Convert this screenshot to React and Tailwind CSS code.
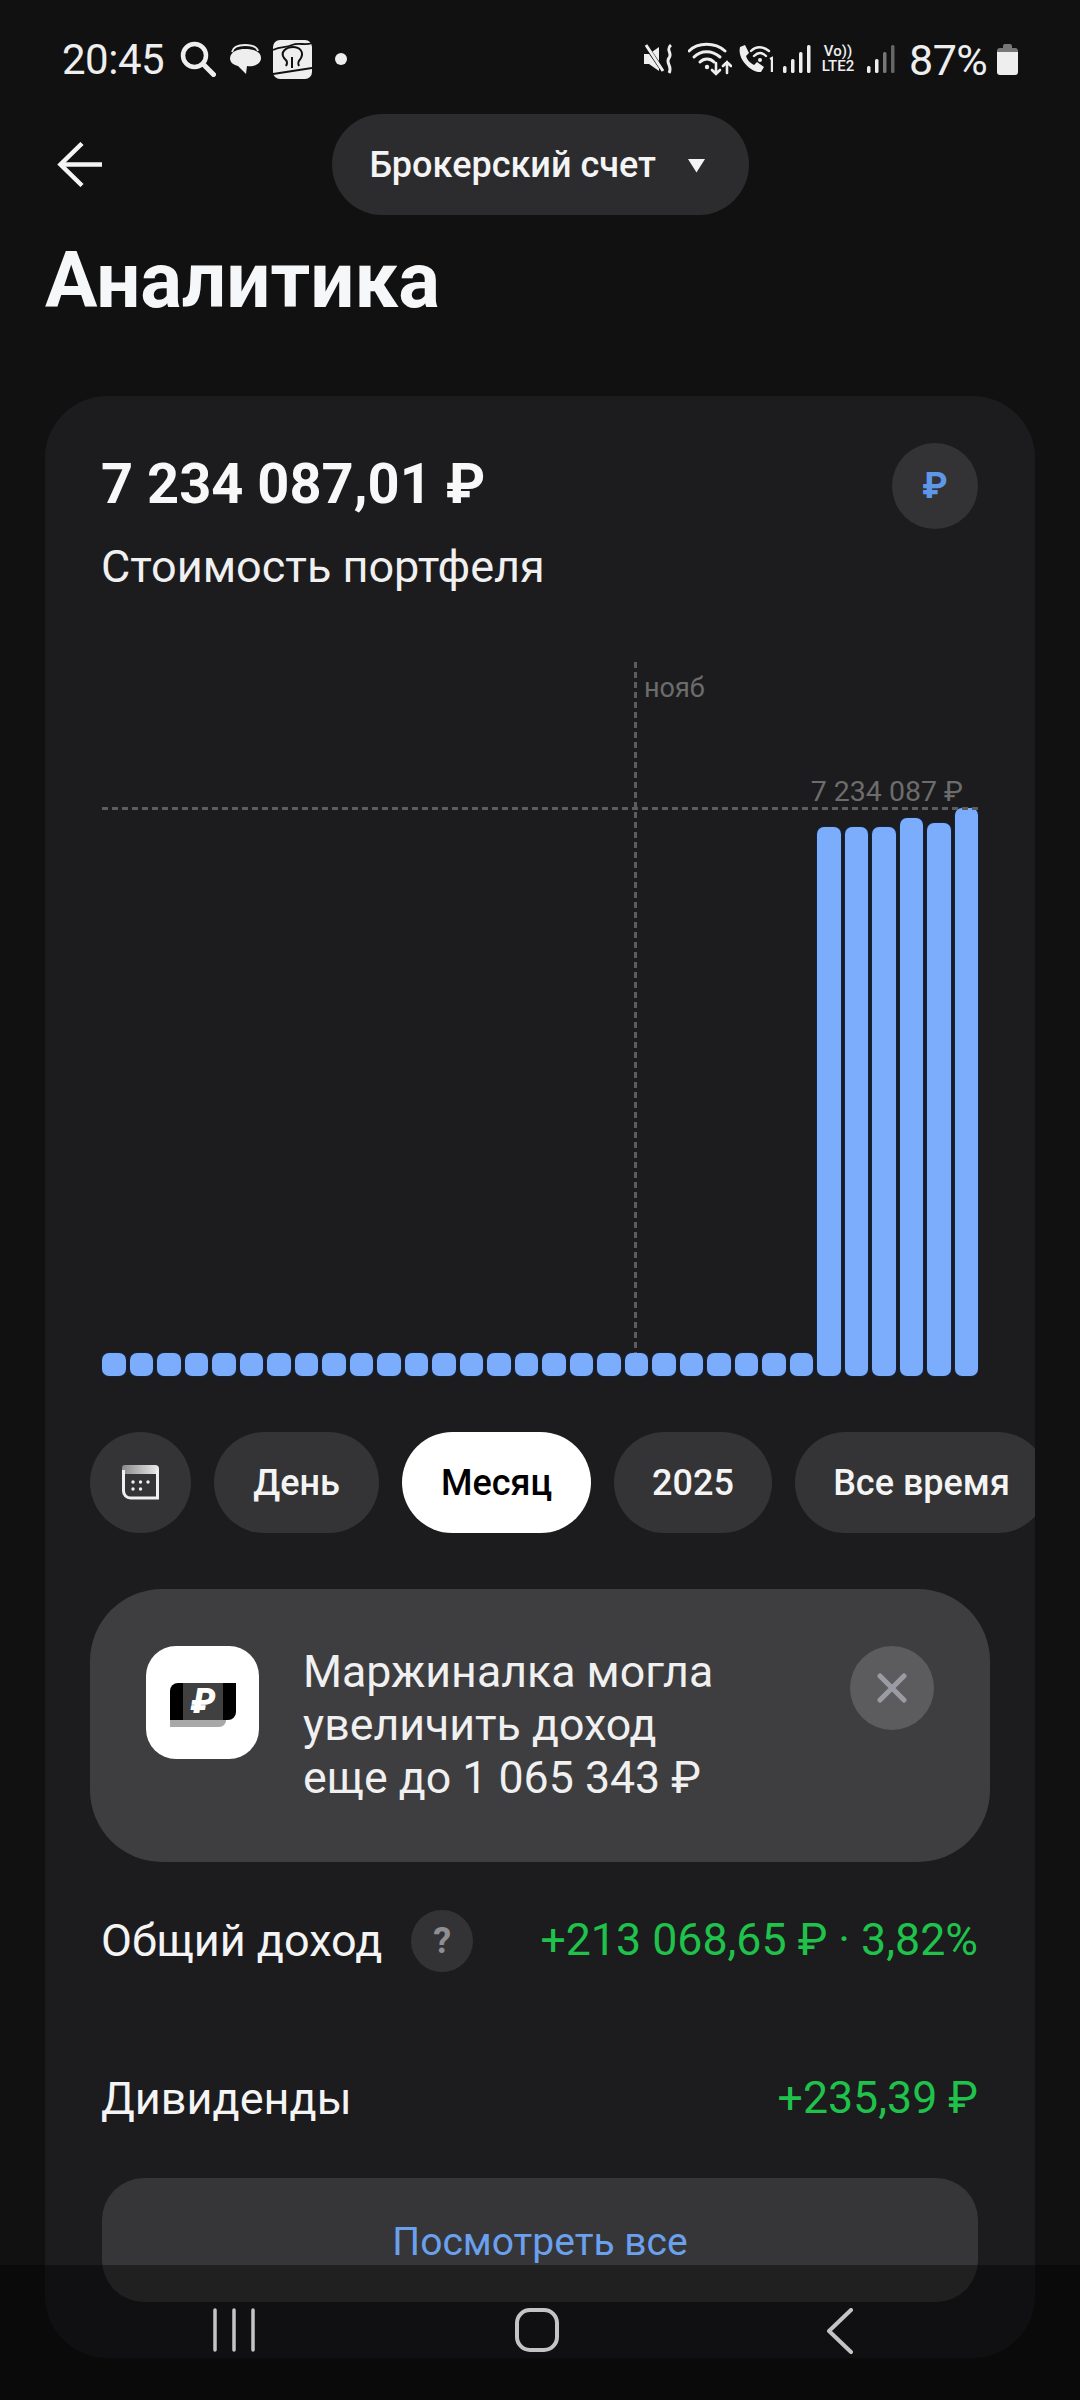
const bars = [
  ...Array(26).fill(23),
  549, 549, 549, 558, 553, 568,
]

function Signal({ dim }) {
  return (
    <svg width="28" height="30" viewBox="0 0 28 30" fill="none">
      <rect x="0" y="22" width="3.5" height="7" rx="1.5" fill="#eee" />
      <rect x="8" y="15" width="3.5" height="14" rx="1.5" fill="#eee" />
      <rect x="16" y="8" width="3.5" height="21" rx="1.5" fill={dim ? '#777' : '#eee'} />
      <rect x="24" y="1" width="3.5" height="28" rx="1.5" fill={dim ? '#666' : '#eee'} />
    </svg>
  )
}

function StatusBar() {
  return (
    <div className="flex h-[114px] items-center justify-between pt-[4px] pl-[62px] pr-[62px] text-[#eeeeee]">
      <div className="flex items-center">
        <span className="mt-[2px] w-[104px] text-[42px] leading-none tracking-[-0.5px]">20:45</span>
        {/* search */}
        <svg className="ml-[14px]" width="36" height="36" viewBox="0 0 36 36" fill="none" stroke="#eee" strokeLinecap="round">
          <circle cx="14.5" cy="14.5" r="11.5" strokeWidth="4.5" />
          <path d="M23 23 L33.5 33.5" strokeWidth="5" />
        </svg>
        {/* chat */}
        <svg className="ml-[14px]" width="31" height="30" viewBox="0 0 31 30">
          <path d="M2 8 C3 3 8 1 15 1 C22 1 27 3 28 7" fill="none" stroke="#eee" strokeWidth="1.8" />
          <path d="M0 14 C1 7 8 5 15 5 C23 5 31 7 31 14 C31 20 24 23 17 22 L16 30 L8 22 C4 21 0 19 0 14 Z" fill="#eee" />
        </svg>
        {/* app icon */}
        <svg className="ml-[12px]" width="39" height="39" viewBox="0 0 39 39">
          <rect width="39" height="39" rx="7" fill="#eee" />
          <path d="M0 10 C8 6 12 8 19 5 C26 2 32 6 39 3" fill="none" stroke="#111" strokeWidth="1.8" />
          <path d="M13 26 C15 22 14 21 11 18 C7 12 13 7 20 7 C27 7 31 12 28 18 C26 21 24 22 26 26" fill="none" stroke="#111" strokeWidth="2" />
          <path d="M19 17 L19 28" stroke="#111" strokeWidth="2" />
          <path d="M0 34 L39 28" stroke="#111" strokeWidth="2" />
        </svg>
        <span className="ml-[23px] h-[12px] w-[12px] rounded-full bg-[#eee]" />
      </div>
      <div className="flex items-center">
        {/* mute + vibrate */}
        <svg width="30" height="30" viewBox="0 0 30 30" fill="none">
          <path d="M0 10 H5 L15 3 V27 L5 20 H0 Z" fill="#eee" />
          <path d="M2 2 L20 28" stroke="#111" strokeWidth="4" />
          <path d="M2 1 L19 27" stroke="#eee" strokeWidth="3" />
          <path d="M27 1 C21 6 29 9 25 14 C21 19 29 22 25 29" stroke="#eee" strokeWidth="3" />
        </svg>
        {/* wifi with arrows */}
        <svg className="ml-[14px]" width="44" height="34" viewBox="0 0 44 34" fill="none" stroke="#eee" strokeWidth="3" strokeLinecap="round">
          <path d="M1 9 C10 0 27 0 37 9" />
          <path d="M6 15 C13 8 24 8 32 15" />
          <path d="M12 20 C16 16 22 16 26 20" />
          <circle cx="19" cy="25" r="2.2" fill="#eee" stroke="none" />
          <path d="M28 21 V32 M24 28 L28 32 L32 28" strokeWidth="2.6" />
          <path d="M39 31 V20 M35 24 L39 20 L43 24" strokeWidth="2.6" />
        </svg>
        {/* wifi call */}
        <svg className="ml-[5px]" width="36" height="28" viewBox="0 0 36 28" fill="none">
          <path d="M3 2 L8 0 L12 8 L9 11 C10 15 13 18 17 20 L20 17 L27 22 L24 27 C14 28 0 14 3 2 Z" fill="#eee" />
          <path d="M14 6 C19 1 26 1 32 6 M17 11 C21 7 25 7 29 11" stroke="#eee" strokeWidth="2.4" strokeLinecap="round" />
          <circle cx="23" cy="15" r="2" fill="#eee" />
          <path d="M33 14 L35 13 V27" stroke="#eee" strokeWidth="2.4" />
        </svg>
        <div className="ml-[10px]">
          <Signal />
        </div>
        <div className="ml-[7px] flex w-[40px] flex-col items-center text-[15px] font-medium leading-[15px]">
          <span>Vo))</span>
          <span>LTE2</span>
        </div>
        <div className="ml-[9px]">
          <Signal dim />
        </div>
        <span className="ml-[14px] mt-[2px] w-[80px] text-[43px] leading-none tracking-[-0.5px]">87%</span>
        <svg className="ml-[8px]" width="21" height="31" viewBox="0 0 21 31">
          <path d="M6 2 a2 2 0 0 1 2 -2 h5 a2 2 0 0 1 2 2 v3 h-9 Z" fill="#777" />
          <path d="M0 7 a3 3 0 0 1 3 -3 h15 a3 3 0 0 1 3 3 v2 h-21 Z" fill="#777" />
          <path d="M0 8 h21 v20 a3 3 0 0 1 -3 3 h-15 a3 3 0 0 1 -3 -3 Z" fill="#eee" />
        </svg>
      </div>
    </div>
  )
}

function Pill({ children, active, className }) {
  return (
    <div
      className={`flex h-[101px] shrink-0 items-center justify-center rounded-full text-[36px] font-medium ${
        active ? 'bg-white text-black' : 'bg-[#343436] text-[#f4f4f4]'
      } ${className}`}
    >
      {children}
    </div>
  )
}

function Chart() {
  return (
    <div className="relative mx-[57px] mt-[69px] h-[714px]">
      <div className="absolute inset-0 flex items-end gap-[4px]">
        {bars.map((h, i) => (
          <div
            key={i}
            className="flex-1 rounded-[7px] bg-[#7badfc] shadow-[0_0_0_1px_#14233c]"
            style={{ height: h }}
          />
        ))}
      </div>
      {/* month divider */}
      <div className="absolute left-[532px] top-0 h-[691px] w-[3px] bg-[repeating-linear-gradient(to_bottom,#5c5c5e_0,#5c5c5e_6px,transparent_6px,transparent_10px)]" />
      <span className="absolute left-[542px] top-[10px] text-[27px] leading-[32px] text-[#6c6c6c]">нояб</span>
      {/* current value line */}
      <div className="absolute inset-x-0 top-[145px] h-[3px] bg-[repeating-linear-gradient(to_right,#5c5c5e_0,#5c5c5e_6px,transparent_6px,transparent_10px)]" />
      <span className="absolute right-[15px] top-[114px] text-[28.5px] leading-[32px] text-[#6c6c6c]">7 234 087 ₽</span>
    </div>
  )
}

function MarginLogo() {
  return (
    <svg width="113" height="113" viewBox="0 0 113 113" className="shrink-0">
      <rect width="113" height="113" rx="30" fill="#fff" />
      <path d="M24 74 H80 V74 C80 78 77 81 73 81 H24 Z" fill="#a8a8a8" />
      <path d="M24 45 a8 8 0 0 1 8 -8 H90 V66 a8 8 0 0 1 -8 8 H24 Z" fill="#000" />
      <rect x="37" y="37" width="40" height="37" fill="#404040" />
      <text x="57" y="67" textAnchor="middle" fontFamily="Roboto" fontWeight="900" fontStyle="italic" fontSize="35" fill="#fff">₽</text>
    </svg>
  )
}

export default function App() {
  return (
    <div className="relative h-[2400px] w-[1080px] overflow-hidden bg-[#111112] font-['Roboto',sans-serif] text-white">
      <StatusBar />

      {/* header */}
      <div className="grid h-[101px] grid-cols-[1fr_auto_1fr] items-center px-[57px]">
        <svg width="45" height="45" viewBox="0 0 45 45" fill="none" stroke="#f4f4f4" strokeWidth="4.5">
          <path d="M45 22.5 H3" />
          <path d="M25 1.5 L3.5 22.5 L25 43.5" />
        </svg>
        <div className="flex h-[101px] w-[417px] items-center rounded-full bg-[#2c2c2e] pl-[38px] text-[36px] font-medium text-[#f4f4f4]">
          <span>Брокерский счет</span>
          <svg className="ml-[31px] mt-[2px]" width="19" height="15" viewBox="0 0 19 15">
            <path d="M1 1 H18 L9.5 14.5 Z" fill="#f4f4f4" />
          </svg>
        </div>
        <div />
      </div>

      <h1 className="ml-[45px] mt-[26px] text-[78px] font-bold leading-[80px] text-[#f6f7f8]">Аналитика</h1>

      {/* main card */}
      <div className="mx-[45px] mt-[75px] overflow-hidden rounded-[62px] bg-[#1c1c1e] pb-[56px]">
        <div className="flex items-start justify-between px-[56px] pt-[48px]">
          <div>
            <div className="text-[56px] font-bold leading-[80px] text-[#f8f8f8]">7 234 087,01 ₽</div>
            <div className="mt-[17px] text-[45px] leading-[52px] text-[#f0f0f0]">Стоимость портфеля</div>
          </div>
          <div className="-mt-[1px] mr-[1px] flex h-[86px] w-[86px] items-center justify-center rounded-full bg-[#333335] text-[36px] font-bold text-[#5e96e8]">
            ₽
          </div>
        </div>

        <Chart />

        {/* period pills */}
        <div className="mt-[56px] flex gap-[23px] pl-[45px]">
          <div className="flex h-[101px] w-[101px] shrink-0 items-center justify-center rounded-full bg-[#343436]">
            <svg width="37" height="35" viewBox="0 0 37 35" fill="none">
              <defs>
                <linearGradient id="cal" x1="0" y1="0" x2="1" y2="0">
                  <stop offset="0" stopColor="#8a8a8a" />
                  <stop offset="1" stopColor="#ececec" />
                </linearGradient>
              </defs>
              <path d="M3 0 H33 a4 4 0 0 1 4 4 V9 H0 V3 a3 3 0 0 1 3 -3 Z" fill="url(#cal)" />
              <path d="M1.5 5 V26 a7 7 0 0 0 7 7 H35.5 V5" stroke="#f0f0f0" strokeWidth="3" />
              <circle cx="11" cy="17" r="1.7" fill="#f0f0f0" />
              <circle cx="18.5" cy="17" r="1.7" fill="#f0f0f0" />
              <circle cx="26" cy="17" r="1.7" fill="#f0f0f0" />
              <circle cx="11" cy="24" r="1.7" fill="#f0f0f0" />
              <circle cx="18.5" cy="24" r="1.7" fill="#f0f0f0" />
            </svg>
          </div>
          <Pill className="w-[165px]">День</Pill>
          <Pill active className="w-[189px]">Месяц</Pill>
          <Pill className="w-[158px] text-[35px]">2025</Pill>
          <Pill className="w-[253px]">Все время</Pill>
        </div>

        {/* margin banner */}
        <div className="mx-[45px] mt-[56px] flex h-[273px] items-start rounded-[72px] bg-[#3e3e40] pl-[56px] pr-[56px] pt-[57px]">
          <MarginLogo />
          <div className="ml-[44px] flex-1 text-[44.7px] leading-[53px] text-[#f0f0f0]">
            Маржиналка могла
            <br />
            увеличить доход
            <br />
            еще до 1 065 343 ₽
          </div>
          <div className="flex h-[84px] w-[84px] shrink-0 items-center justify-center rounded-full bg-[#5c5c5e]">
            <svg width="30" height="30" viewBox="0 0 30 30" stroke="#9b9ba3" strokeWidth="5" strokeLinecap="round">
              <path d="M3 3 L27 27 M27 3 L3 27" />
            </svg>
          </div>
        </div>

        {/* income rows */}
        <div className="mt-[48px] flex h-[62px] items-center justify-between pl-[56px] pr-[57px]">
          <div className="flex items-center">
            <span className="text-[45px] text-[#f4f4f4]">Общий доход</span>
            <span className="ml-[29px] flex h-[62px] w-[62px] items-center justify-center rounded-full bg-[#333336] text-[36px] font-bold text-[#8e8e93]">?</span>
          </div>
          <span className="text-[44.7px] text-[#1fc24a]">+213 068,65 ₽ · 3,82%</span>
        </div>
        <div className="mt-[96px] flex h-[62px] items-center justify-between pl-[56px] pr-[57px]">
          <span className="text-[45px] text-[#f4f4f4]">Дивиденды</span>
          <span className="text-[44.7px] text-[#1fc24a]">+235,39 ₽</span>
        </div>

        <div className="mx-[57px] mt-[48px] flex h-[124px] justify-center rounded-[42px] bg-[#363638] pt-[40px] text-[39px] leading-[48px] text-[#6ba0ee]">
          Посмотреть все
        </div>
      </div>

      {/* system nav over the content */}
      <div className="absolute inset-x-0 bottom-0 h-[135px] bg-black/40 pt-[43px]">
        <div className="ml-[82px] grid w-[909px] grid-cols-3 justify-items-center">
          <svg width="42" height="44" viewBox="0 0 42 44" stroke="#c4c4c4" strokeWidth="3.5" strokeLinecap="round">
            <path d="M2 2 V42 M21 2 V42 M40 2 V42" />
          </svg>
          <svg width="44" height="44" viewBox="0 0 44 44" fill="none" stroke="#c4c4c4" strokeWidth="4">
            <rect x="2" y="2" width="40" height="40" rx="13" />
          </svg>
          <svg width="26" height="46" viewBox="0 0 26 46" fill="none" stroke="#c4c4c4" strokeWidth="4" strokeLinecap="round" strokeLinejoin="round">
            <path d="M24 2 L2 23 L24 44" />
          </svg>
        </div>
      </div>
    </div>
  )
}
